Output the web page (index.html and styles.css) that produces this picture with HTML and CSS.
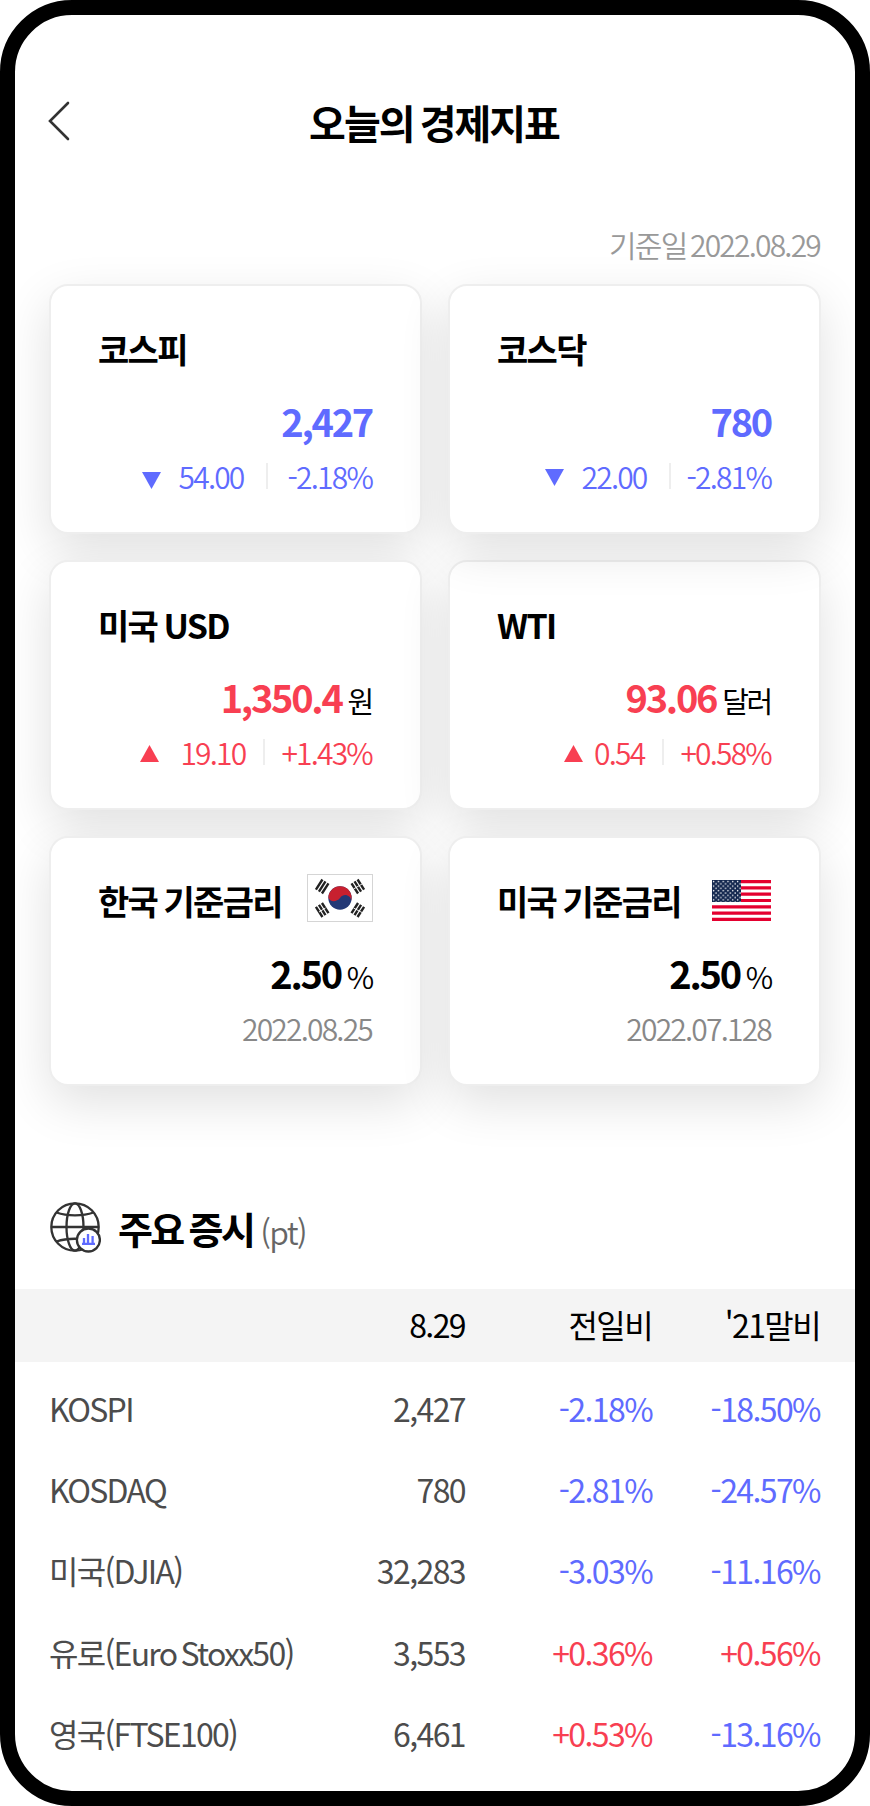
FILE: index.html
```html
<!DOCTYPE html>
<html lang="ko">
<head>
    <meta charset="UTF-8">
    <meta name="viewport" content="width=device-width, initial-scale=1.0">
    <title>오늘의 경제지표</title>
    <link rel="stylesheet" href="styles.css">
</head>
<body>
    <div class="phone">
        <header class="header">
            <svg class="back" viewBox="0 0 22 40" width="22" height="40"><path d="M20 2 L2 20 L20 38" fill="none" stroke="#333" stroke-width="2.6" stroke-linecap="round"/></svg>
            <h1>오늘의 경제지표</h1>
        </header>
        <p class="base-date">기준일 2022.08.29</p>

        <section class="cards">
            <div class="card down">
                <div class="card-title"><h2>코스피</h2></div>
                <div class="value"><strong>2,427</strong></div>
                <div class="change kospi">
                    <svg class="arrow" viewBox="0 0 19 17" width="19" height="17"><path d="M0 0H19L9.5 17Z"/></svg>
                    <span class="diff">54.00</span>
                    <span class="rate">-2.18%</span>
                </div>
            </div>
            <div class="card down raised">
                <div class="card-title"><h2>코스닥</h2></div>
                <div class="value"><strong>780</strong></div>
                <div class="change kosdaq">
                    <svg class="arrow" viewBox="0 0 19 17" width="19" height="17"><path d="M0 0H19L9.5 17Z"/></svg>
                    <span class="diff">22.00</span>
                    <span class="rate">-2.81%</span>
                </div>
            </div>
            <div class="card up">
                <div class="card-title"><h2>미국 USD</h2></div>
                <div class="value"><strong>1,350.4</strong><span class="unit">원</span></div>
                <div class="change usd">
                    <svg class="arrow" viewBox="0 0 19 17" width="19" height="17"><path d="M0 17H19L9.5 0Z"/></svg>
                    <span class="diff">19.10</span>
                    <span class="rate">+1.43%</span>
                </div>
            </div>
            <div class="card up">
                <div class="card-title"><h2>WTI</h2></div>
                <div class="value"><strong>93.06</strong><span class="unit">달러</span></div>
                <div class="change wti">
                    <svg class="arrow" viewBox="0 0 19 17" width="19" height="17"><path d="M0 17H19L9.5 0Z"/></svg>
                    <span class="diff">0.54</span>
                    <span class="rate">+0.58%</span>
                </div>
            </div>
            <div class="card">
                <div class="card-title">
                    <h2>한국 기준금리</h2>
                    <svg class="flag-kr" viewBox="0 0 66 48" width="66" height="48">
                        <defs>
                            <g id="bars" stroke="#222" stroke-width="2.4">
                                <path d="M-6 -3.6H6M-6 0H6M-6 3.6H6"/>
                            </g>
                        </defs>
                        <rect x=".5" y=".5" width="65" height="47" fill="#fff" stroke="#d5d5d5"/>
                        <circle cx="33" cy="24" r="11.7" fill="#233876"/>
                        <path d="M22.5 18.7A11.7 11.7 0 0 1 44.4 26.5C43.5 21.5 37 18.5 33 24C29.5 28.5 22.5 28 21.4 23.5A11.7 11.7 0 0 1 22.5 18.7Z" fill="#c8202f"/>
                        <use href="#bars" transform="translate(15.2 12.5) rotate(-57)"/>
                        <use href="#bars" transform="translate(50.8 12.5) rotate(57)"/>
                        <use href="#bars" transform="translate(15.2 36) rotate(57)"/>
                        <use href="#bars" transform="translate(50.8 36) rotate(-57)"/>
                        <path d="M46.5 15L55 10M12 38L18.5 34M46.5 34L55 38.5" stroke="#fff" stroke-width=".9"/>
                    </svg>
                </div>
                <div class="value"><strong>2.50</strong><span class="unit percent">%</span></div>
                <div class="date">2022.08.25</div>
            </div>
            <div class="card">
                <div class="card-title">
                    <h2>미국 기준금리</h2>
                    <svg class="flag-us" viewBox="0 0 59 41" width="59" height="41">
                        <defs>
                            <pattern id="stars" width="4.8" height="4.6" patternUnits="userSpaceOnUse">
                                <circle cx="1.6" cy="1.5" r=".75" fill="#fff"/>
                                <circle cx="4" cy="3.8" r=".75" fill="#fff"/>
                            </pattern>
                        </defs>
                        <rect width="59" height="41" fill="#fff"/>
                        <path d="M0 1.58H59M0 7.88H59M0 14.19H59M0 20.5H59M0 26.81H59M0 33.12H59M0 39.42H59" stroke="#e4002f" stroke-width="3.15"/>
                        <rect width="29" height="22" fill="#14284f"/>
                        <rect width="29" height="22" fill="url(#stars)"/>
                    </svg>
                </div>
                <div class="value"><strong>2.50</strong><span class="unit percent">%</span></div>
                <div class="date">2022.07.128</div>
            </div>
        </section>

        <div class="section-title">
            <svg viewBox="0 0 52 52" width="52" height="52" fill="none" stroke="#333" stroke-width="2.3">
                <circle cx="26" cy="26" r="23.7"/>
                <ellipse cx="26" cy="26" rx="8.5" ry="23.7"/>
                <path d="M2.3 26H49.7M7.5 11.5C18 15.2 34 15.2 44.5 11.5M7.5 40.5C18 36.8 34 36.8 44.5 40.5"/>
                <circle cx="39.4" cy="39" r="11.5" fill="#fff"/>
                <path d="M33 42.8H46M35 42V37M39 42V33M43.6 42V35" stroke="#5f6bff" stroke-width="2.3"/>
            </svg>
            <h2>주요 증시</h2>
            <span>(pt)</span>
        </div>

        <table class="stocks">
            <thead>
                <tr><th class="name"></th><th class="price">8.29</th><th class="day">전일비</th><th class="year">'21말비</th></tr>
            </thead>
            <tbody>
                <tr><td>KOSPI</td><td>2,427</td><td class="down">-2.18%</td><td class="down">-18.50%</td></tr>
                <tr><td>KOSDAQ</td><td>780</td><td class="down">-2.81%</td><td class="down">-24.57%</td></tr>
                <tr><td>미국(DJIA)</td><td>32,283</td><td class="down">-3.03%</td><td class="down">-11.16%</td></tr>
                <tr><td>유로(Euro Stoxx50)</td><td>3,553</td><td class="up">+0.36%</td><td class="up">+0.56%</td></tr>
                <tr><td>영국(FTSE100)</td><td>6,461</td><td class="up">+0.53%</td><td class="down">-13.16%</td></tr>
            </tbody>
        </table>
    </div>
</body>
</html>
```
FILE: styles.css
```css
* {
    box-sizing: border-box;
    margin: 0;
    padding: 0;
}
body {
    font-family: "Noto Sans CJK KR", sans-serif;
    background: #fff;
    color: #000;
    word-spacing: -3px;
}
.phone {
    width: 870px;
    height: 1806px;
    border: 15px solid #000;
    border-radius: 72px;
    background: #fff;
    overflow: hidden;
}
.header {
    display: flex;
    align-items: center;
    height: 60px;
    margin-top: 78px;
    padding: 0 33px;
}
.header h1 {
    flex: 1;
    margin-right: 24px;
    padding-bottom: 3px;
    font-size: 40px;
    line-height: 60px;
    letter-spacing: -0.05em;
    text-align: center;
}
.back {
    margin-bottom: 5px;
}
.base-date {
    margin-top: 68px;
    padding-right: 35px;
    font-size: 30px;
    font-weight: 350;
    line-height: 46px;
    letter-spacing: -0.06em;
    text-align: right;
    color: #999;
}
.cards {
    display: grid;
    grid-template-columns: 373px 373px;
    grid-auto-rows: 250px;
    gap: 26px;
    margin: 17px 34px 0;
}
.card {
    padding: 37px 48px 0;
    border: 2px solid #eee;
    border-radius: 19px;
    background: #fff;
    box-shadow: 0 17px 50px rgba(0, 0, 0, 0.12);
}
.raised {
    position: relative;
    z-index: 1;
}
.card-title {
    display: flex;
    justify-content: space-between;
    height: 50px;
}
.card-title h2 {
    margin-left: -1px;
    font-size: 34px;
    line-height: 51px;
    letter-spacing: -0.05em;
    word-spacing: -1.5px;
    white-space: nowrap;
}
.flag-kr {
    flex: none;
    margin: -1px -1px 0 0;
}
.flag-us {
    flex: none;
    margin-top: 5px;
}
.value {
    display: flex;
    justify-content: flex-end;
    align-items: baseline;
    height: 50px;
    margin-top: 23px;
    font-size: 38px;
    line-height: 50px;
    letter-spacing: -0.06em;
}
.unit {
    margin-left: 6px;
    font-size: 29px;
    line-height: 40px;
    color: #000;
}
.percent {
    font-size: 30px;
    font-weight: 350;
}
.change,
.date {
    display: flex;
    justify-content: flex-end;
    align-items: center;
    height: 44px;
    margin-top: 8px;
    font-size: 30px;
    font-weight: 350;
    line-height: 44px;
    letter-spacing: -0.06em;
}
.date {
    color: #888;
}
.arrow {
    margin: 3px 18px 0 0;
    fill: currentColor;
}
.rate {
    display: flex;
    align-items: center;
    margin-left: 22px;
}
.rate::before {
    content: "";
    width: 2px;
    height: 26px;
    margin-right: 16px;
    background: #eee;
}
.kospi .arrow {
    margin-top: 8px;
}
.kospi .rate::before {
    margin-right: 20px;
}
.usd .arrow {
    margin-right: 21px;
}
.usd .rate,
.wti .rate {
    margin-left: 18px;
}
.wti .arrow {
    margin-right: 11px;
}
.card.down .value,
.down {
    color: #5f6bff;
}
.card.up .value,
.up {
    color: #f83f52;
}
.card h2,
.card.up .unit {
    color: #000;
}
.section-title {
    display: flex;
    align-items: center;
    margin: 111px 34px 0;
    height: 60px;
}
.section-title h2 {
    margin-left: 17px;
    padding-top: 1px;
    font-size: 38px;
    line-height: 60px;
    letter-spacing: -0.07em;
    word-spacing: -2px;
}
.section-title span {
    margin-left: 7px;
    padding-top: 8px;
    font-size: 32px;
    font-weight: 350;
    letter-spacing: -0.05em;
    color: #666;
}
.stocks {
    width: 840px;
    margin-top: 32px;
    table-layout: fixed;
    border-collapse: collapse;
    font-size: 32px;
    line-height: 46px;
    letter-spacing: -0.05em;
}
.stocks th {
    height: 73px;
    padding-bottom: 3px;
    font-size: 32px;
    font-weight: 400;
    text-align: right;
    background: #f4f4f4;
}
.stocks td {
    height: 81.4px;
    text-align: right;
    white-space: nowrap;
    color: #4c4c4c;
}
.stocks tbody::before {
    content: "";
    display: block;
    height: 5px;
}
.stocks td:first-child {
    padding-left: 34px;
    text-align: left;
    letter-spacing: -0.054em;
}
.stocks th:last-child,
.stocks td:last-child {
    padding-right: 35px;
}
.name {
    width: 300px;
}
.price {
    width: 150px;
}
.day {
    width: 187px;
}
.stocks td.down {
    color: #5f6bff;
}
.stocks td.up {
    color: #f83f52;
}
```
